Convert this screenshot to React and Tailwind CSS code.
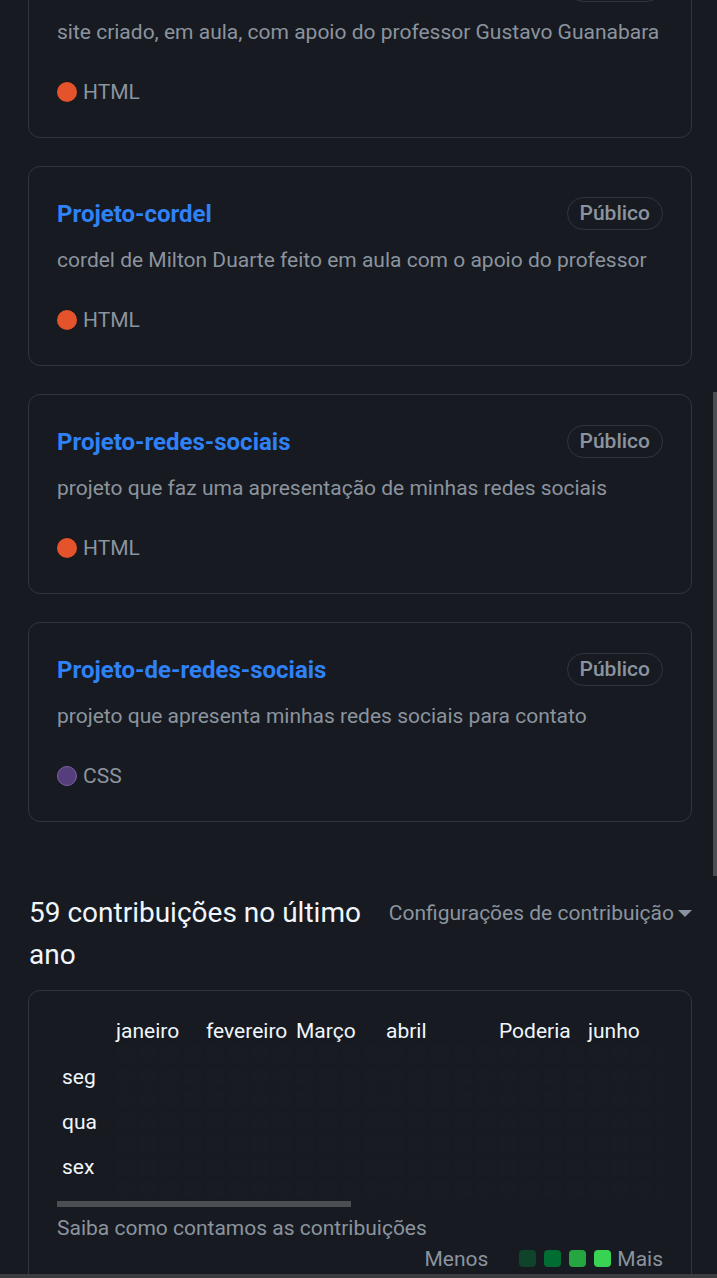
import React from 'react';

const repos = [
  { name: 'Projeto-site', desc: 'site criado, em aula, com apoio do professor Gustavo Guanabara', lang: 'HTML', color: 'bg-[#e5532c]' },
  { name: 'Projeto-cordel', desc: 'cordel de Milton Duarte feito em aula com o apoio do professor', lang: 'HTML', color: 'bg-[#e5532c]' },
  { name: 'Projeto-redes-sociais', desc: 'projeto que faz uma apresentação de minhas redes sociais', lang: 'HTML', color: 'bg-[#e5532c]' },
  { name: 'Projeto-de-redes-sociais', desc: 'projeto que apresenta minhas redes sociais para contato', lang: 'CSS', color: 'bg-[#563d7c] border border-[#7a62a3]' },
];

const months = [
  { label: 'janeiro', w: 'w-[90px]' },
  { label: 'fevereiro', w: 'w-[90px]' },
  { label: 'Março', w: 'w-[90px]' },
  { label: 'abril', w: 'w-[113px]' },
  { label: 'Poderia', w: 'w-[89px]' },
  { label: 'junho', w: 'w-[90px]' },
];

const days = ['', 'seg', '', 'qua', '', 'sex', ''];

const RepoCard = ({ repo, first }) => (
  <div className={`rounded-xl border border-[#30363d] px-[28px] pt-[30px] pb-[30px] ${first ? '-mt-[62px]' : ''}`}>
    <div className="flex items-center justify-between">
      <a className="text-[24px] font-bold leading-[30px] text-[#2f81f7]">{repo.name}</a>
      <span className="flex h-[33px] items-center rounded-full border border-[#30363d] px-[12px] text-[21px] font-medium text-[#8b949e]">
        Público
      </span>
    </div>
    <p className="mt-[15px] text-[21px] leading-[30px] text-[#8b949e]">{repo.desc}</p>
    <div className="mt-[30px] flex items-center gap-[6px] text-[21px] leading-[30px] text-[#8b949e]">
      <span className={`h-[20px] w-[20px] rounded-full ${repo.color}`} />
      <span>{repo.lang}</span>
    </div>
  </div>
);

export default function App() {
  return (
    <div className="relative h-[1278px] overflow-hidden bg-[#171a21] font-['Roboto',sans-serif]">
      <div className="pl-[28px] pr-[25px]">
        <div className="flex flex-col gap-[28px]">
          {repos.map((r, i) => (
            <RepoCard key={r.name} repo={r} first={i === 0} />
          ))}
        </div>

        <div className="mt-[70px] flex items-start justify-between gap-[24px]">
          <h2 className="pl-[1px] text-[28px] leading-[42px] text-[#f0f6fc]">59 contribuições no último ano</h2>
          <span className="flex shrink-0 items-center gap-[4px] whitespace-nowrap text-[21px] leading-[42px] text-[#8b949e]">
            Configurações de contribuição
            <svg width="14" height="8" viewBox="0 0 14 8" className="mt-[1px]">
              <path d="M0 0h14L7 7z" fill="#8b949e" />
            </svg>
          </span>
        </div>

        <div className="mt-[14px] rounded-xl border border-[#30363d] px-[28px] pt-[28px] pb-[30px]">
          <div className="overflow-hidden">
            <div className="flex text-[21px] leading-[24px] text-[#f0f6fc]">
              <span className="w-[59px] shrink-0" />
              {months.map((m) => (
                <span key={m.label} className={`${m.w} shrink-0`}>{m.label}</span>
              ))}
            </div>
            <div className="flex">
              <div className="flex w-[59px] shrink-0 flex-col">
                {days.map((d, i) => (
                  <span key={i} className="h-[22.5px] pl-[5px] text-[21px] leading-[22.5px] text-[#f0f6fc]">{d}</span>
                ))}
              </div>
              <div className="flex gap-[4.5px]">
                {Array.from({ length: 26 }).map((_, c) => (
                  <div key={c} className="flex flex-col gap-[4.5px] pt-[2px]">
                    {days.map((_, r) => (
                      <span key={r} className="h-[18px] w-[18px] rounded-[3px] bg-[#181b22]" />
                    ))}
                  </div>
                ))}
              </div>
            </div>
          </div>
          <div className="h-[6px] w-[294px] bg-[#4b4e52]" />
          <p className="mt-[8px] text-[21px] leading-[26px] text-[#8b949e]">Saiba como contamos as contribuições</p>
          <div className="mt-[5px] flex items-center justify-end text-[21px] leading-[26px] text-[#8b949e]">
            <span className="mr-[31px]">Menos</span>
            <div className="flex gap-[8px]">
              <span className="h-[17px] w-[17px] rounded-[4px] bg-[#0e4429]" />
              <span className="h-[17px] w-[17px] rounded-[4px] bg-[#006d32]" />
              <span className="h-[17px] w-[17px] rounded-[4px] bg-[#26a641]" />
              <span className="h-[17px] w-[17px] rounded-[4px] bg-[#39d353]" />
            </div>
            <span className="ml-[6px]">Mais</span>
          </div>
        </div>
      </div>

      <div className="absolute right-0 top-[392px] h-[484px] w-[4px] bg-[#4b4e52]" />
      <div className="absolute bottom-0 left-0 h-[4px] w-full bg-[#3c3d3f]" />
    </div>
  );
}
